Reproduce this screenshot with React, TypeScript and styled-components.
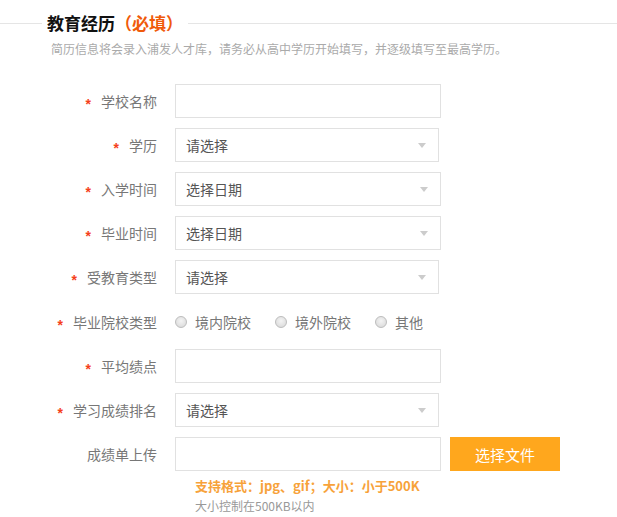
import styled, { createGlobalStyle } from "styled-components";

const GlobalStyle = createGlobalStyle`
  html, body {
    margin: 0;
    padding: 0;
    background: #fff;
  }
  body {
    font-family: "Noto Sans CJK SC", "Noto Sans", sans-serif;
    color: #666;
  }
`;

const Wrapper = styled.div`
  width: 617px;
  height: 517px;
  overflow: hidden;
  background: #fff;
`;

const Header = styled.div`
  display: flex;
  align-items: center;
  height: 30px;
  margin-top: 8px;
`;

const HeaderLine = styled.div<{ grow?: boolean }>`
  height: 1px;
  background: #e5e5e5;
  width: ${(p) => (p.grow ? "auto" : "42px")};
  flex: ${(p) => (p.grow ? 1 : "none")};
`;

const Title = styled.h2`
  margin: 0;
  padding: 0 5px;
  font-size: 17px;
  line-height: 30px;
  font-weight: 700;
  color: #111;
  white-space: nowrap;
`;

const Required = styled.span`
  color: #f05a0a;
`;

const Subtitle = styled.p`
  margin: 2px 0 0 51px;
  font-size: 12px;
  line-height: 18px;
  color: #aaa;
`;

const Form = styled.div`
  display: flex;
  flex-direction: column;
  gap: 10px;
  margin-top: 26px;
`;

const Row = styled.div<{ tall?: boolean }>`
  display: flex;
  align-items: center;
  gap: 18px;
  height: ${(p) => (p.tall ? "35px" : "34px")};
`;

const Label = styled.div`
  width: 157px;
  display: flex;
  justify-content: flex-end;
  align-items: center;
  font-size: 14px;
  line-height: 20px;
  color: #777;
  white-space: nowrap;
`;

const Star = styled.span`
  color: #f5401c;
  font-family: "Liberation Sans", sans-serif;
  font-size: 14px;
  font-weight: 700;
  line-height: 14px;
  padding-top: 6px;
  margin-right: 10px;
`;

const TextBox = styled.div<{ width?: number }>`
  box-sizing: border-box;
  width: ${(p) => p.width ?? 266}px;
  height: 34px;
  border: 1px solid #e1e1e1;
  background: #fff;
  display: flex;
  align-items: center;
  justify-content: space-between;
  padding: 0 12px 0 10px;
  font-size: 14px;
  color: #555;
`;

const Caret = styled.span`
  width: 0;
  height: 0;
  border-left: 4px solid transparent;
  border-right: 4px solid transparent;
  border-top: 5px solid #ccc;
`;

const Radios = styled.div`
  display: flex;
  align-items: center;
`;

const RadioItem = styled.label`
  width: 100px;
  display: flex;
  align-items: center;
  gap: 8px;
  font-size: 14px;
  color: #777;
`;

const RadioDot = styled.span`
  box-sizing: border-box;
  width: 12px;
  height: 12px;
  border-radius: 50%;
  border: 1px solid #bdbdbd;
  background: radial-gradient(circle at 50% 40%, #f4f4f4 0%, #dcdcdc 80%);
`;

const FileButton = styled.button`
  margin-left: -9px;
  width: 110px;
  height: 34px;
  border: none;
  background: #ffa71d;
  color: #fff;
  font-family: inherit;
  font-size: 15px;
  cursor: pointer;
`;

const Hints = styled.div`
  margin: 6px 0 0 195px;
  display: flex;
  flex-direction: column;
`;

const HintStrong = styled.div`
  font-size: 13px;
  line-height: 18px;
  font-weight: 700;
  color: #f7a23a;
`;

const HintMuted = styled.div`
  font-size: 12px;
  line-height: 22px;
  color: #999;
`;

type Field = {
  label: string;
  required: boolean;
  kind: "text" | "select" | "date";
};

const fieldsTop: Field[] = [
  { label: "学校名称", required: true, kind: "text" },
  { label: "学历", required: true, kind: "select" },
  { label: "入学时间", required: true, kind: "date" },
  { label: "毕业时间", required: true, kind: "date" },
  { label: "受教育类型", required: true, kind: "select" },
];

const fieldsBottom: Field[] = [
  { label: "平均绩点", required: true, kind: "text" },
  { label: "学习成绩排名", required: true, kind: "select" },
];

function FieldRow({ field }: { field: Field }) {
  return (
    <Row>
      <Label>
        {field.required && <Star>*</Star>}
        {field.label}
      </Label>
      {field.kind === "text" && <TextBox />}
      {field.kind === "select" && (
        <TextBox width={264}>
          请选择
          <Caret />
        </TextBox>
      )}
      {field.kind === "date" && (
        <TextBox>
          选择日期
          <Caret />
        </TextBox>
      )}
    </Row>
  );
}

export default function App() {
  return (
    <Wrapper>
      <GlobalStyle />
      <Header>
        <HeaderLine />
        <Title>
          教育经历<Required>（必填）</Required>
        </Title>
        <HeaderLine grow />
      </Header>
      <Subtitle>
        简历信息将会录入浦发人才库，请务必从高中学历开始填写，并逐级填写至最高学历。
      </Subtitle>
      <Form>
        {fieldsTop.map((f) => (
          <FieldRow key={f.label} field={f} />
        ))}
        <Row tall>
          <Label>
            <Star>*</Star>
            毕业院校类型
          </Label>
          <Radios>
            {["境内院校", "境外院校", "其他"].map((t) => (
              <RadioItem key={t}>
                <RadioDot />
                {t}
              </RadioItem>
            ))}
          </Radios>
        </Row>
        {fieldsBottom.map((f) => (
          <FieldRow key={f.label} field={f} />
        ))}
        <Row>
          <Label>成绩单上传</Label>
          <TextBox />
          <FileButton>选择文件</FileButton>
        </Row>
      </Form>
      <Hints>
        <HintStrong>支持格式：jpg、gif；大小：小于500K</HintStrong>
        <HintMuted>大小控制在500KB以内</HintMuted>
      </Hints>
    </Wrapper>
  );
}
